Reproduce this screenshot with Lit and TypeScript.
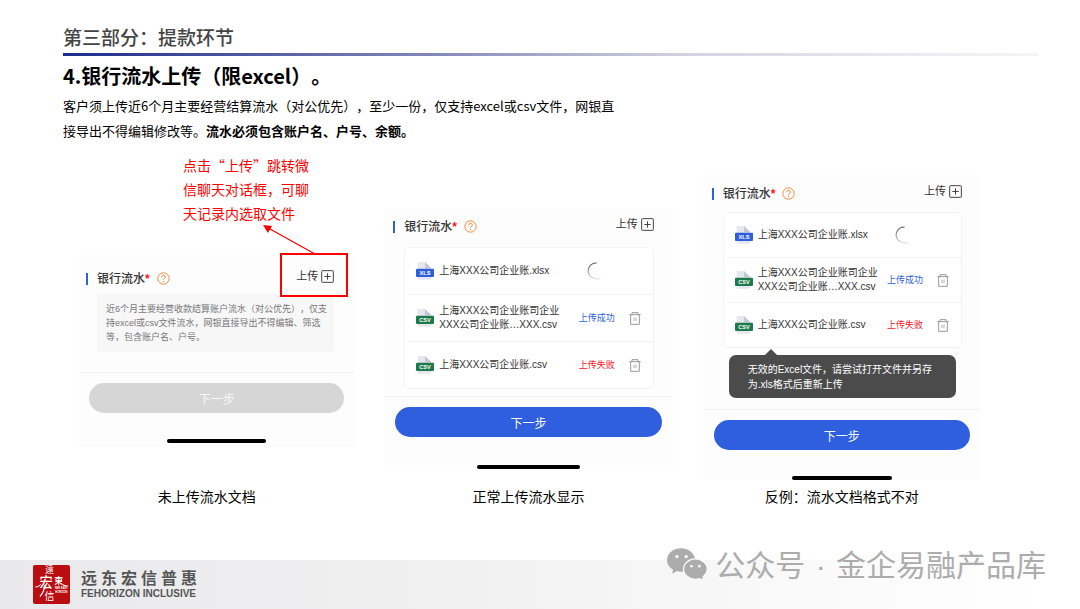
import { LitElement, html, svg, css, nothing } from "lit";
import { customElement, property } from "lit/decorators.js";

type FileKind = "xls" | "csv";
type Status = "loading" | "ok" | "fail";

interface FileRow {
  kind: FileKind;
  lines: string[];
  status: Status;
}

const FILES: FileRow[] = [
  { kind: "xls", lines: ["上海XXX公司企业账.xlsx"], status: "loading" },
  { kind: "csv", lines: ["上海XXX公司企业账司企业", "XXX公司企业账…XXX.csv"], status: "ok" },
  { kind: "csv", lines: ["上海XXX公司企业账.csv"], status: "fail" },
];

const fileIcon = (kind: FileKind) => html`
  <svg class="file" viewBox="0 0 54 54" aria-hidden="true">
    <path d="M9 0H27L46 19V49Q46 53 42 53H9Q5 53 5 49V4Q5 0 9 0Z" fill="#e4e7ed" />
    <path d="M27 0L46 19H31Q27 19 27 15Z" fill="#c2c8d2" />
    <path d="M0 23Q0 20 3 20H51Q54 20 54 23V42Q54 45 51 45H3Q0 45 0 42Z"
      fill=${kind === "xls" ? "#2d5fdc" : "#1d7a4a"} />
    ${svg`<text x="27" y="39" text-anchor="middle" font-size="17" font-weight="700" fill="#fff">${kind.toUpperCase()}</text>`}
  </svg>
`;

const trashIcon = html`
  <svg class="trash-icon" viewBox="0 0 36 39" aria-hidden="true" fill="none" stroke="#8a8a8a" stroke-width="2.6">
    <path d="M1 8H35M9 8V2H27V8M5 8V37H31V8" />
    <path d="M15 17V27M21 17V27" stroke-width="2" />
  </svg>
`;

const spinner = html`
  <svg class="spinner" viewBox="0 0 48 54" role="img" aria-label="上传中" fill="none">
    <defs>
      <linearGradient id="fade" x1="0" y1="0" x2="0" y2="1">
        <stop offset="0" stop-color="#555" />
        <stop offset="0.5" stop-color="#999" />
        <stop offset="1" stop-color="#e6e6e6" />
      </linearGradient>
    </defs>
    <path d="M29 3A24 24 0 0 0 9 42Q20 53 40 50" stroke="url(#fade)" stroke-width="3.4" />
  </svg>
`;

@customElement("upload-card")
export class UploadCard extends LitElement {
  @property({ attribute: false }) files: FileRow[] = [];
  @property() hint = "";
  @property({ attribute: false }) error: string[] = [];
  @property({ type: Boolean }) marked = false;

  static styles = css`
    :host {
      display: flex;
      flex-direction: column;
      background: #fdfdfe;
      font-family: "Liberation Sans", "Noto Sans CJK SC", sans-serif;
      color: #333;
      padding-top: var(--top, 8px);
    }
    button {
      font: inherit;
      color: inherit;
      background: none;
      border: 0;
      padding: 0;
      margin: 0;
    }
    .head {
      display: flex;
      align-items: flex-start;
      padding: 0 var(--right, 19px) 0 var(--left, 20px);
      line-height: 16px;
    }
    .title {
      display: flex;
      align-items: center;
      margin: 3px 0 0 -11px;
      font-size: 12px;
      font-weight: 500;
    }
    .title::before {
      content: "";
      width: 2px;
      height: 12px;
      margin-right: 9px;
      background: #2f5fdc;
    }
    .star {
      color: #f5141e;
      font-weight: 700;
    }
    .help {
      display: flex;
      margin: 4px 0 0 7px;
    }
    .help svg {
      width: 13px;
      height: 13px;
    }
    .upload {
      position: relative;
      display: flex;
      align-items: center;
      gap: 3px;
      margin-left: auto;
      font-size: 11px;
      line-height: 16px;
    }
    .upload .plus {
      width: 13px;
      height: 13px;
    }
    .frame {
      position: absolute;
      inset: -15px -14px -13px -16px;
      border: 2px solid #f00;
    }
    .arrow {
      position: absolute;
      width: 56px;
      height: 30px;
      right: 17px;
      bottom: 29px;
    }
    .hint {
      margin: 7px var(--right, 19px) 20px var(--left, 20px);
      padding: 8px 4px 8px 9px;
      border-radius: 3px;
      background: #f7f7f7;
      color: #777;
      font-size: 9px;
      line-height: 14px;
    }
    .list {
      list-style: none;
      margin: var(--list-gap, 12px) var(--right, 19px) 7px var(--left, 20px);
      padding: 0;
      border: 1px solid #f3f3f4;
      border-radius: 5px;
      background: #fff;
    }
    .row {
      display: grid;
      grid-template-columns: 18px 1fr 38px 12px;
      align-items: center;
      height: var(--row, 46px);
      margin-left: 3px;
      padding: 0 12px 0 8px;
      font-size: 10px;
      line-height: 14px;
    }
    .row + .row {
      border-top: 1px solid #f3f3f4;
    }
    .name {
      padding-left: 5px;
      white-space: nowrap;
    }
    .file {
      width: 18px;
      height: 18px;
      font-family: "Liberation Sans", sans-serif;
    }
    .status {
      font-size: 9px;
      margin-left: -12px;
      white-space: nowrap;
    }
    .loading {
      margin-left: -4px;
      display: flex;
    }
    .ok {
      color: #2f5fdc;
    }
    .fail {
      color: #f5141e;
    }
    .trash {
      display: flex;
    }
    .trash-icon {
      width: 12px;
      height: 13px;
    }
    .spinner {
      width: 16px;
      height: 18px;
    }
    .error {
      position: relative;
      margin: 0 25px 11px 26px;
      padding: 7px 8px 6px 19px;
      border-radius: 7px;
      background: #4b4b4b;
      color: #fff;
      font-size: 10px;
      line-height: 15px;
      white-space: nowrap;
    }
    .error::before {
      content: "";
      position: absolute;
      left: 36px;
      top: -6px;
      border: 6px solid transparent;
      border-top: 0;
      border-bottom-color: #4b4b4b;
    }
    .bottom {
      display: flex;
      flex-direction: column;
      align-items: center;
      border-top: 1px solid #f4f4f4;
      padding: 10px var(--side, 11px) 0;
    }
    .next {
      align-self: stretch;
      height: 30px;
      border-radius: 15px;
      background: #2f5fdf;
      color: #fff;
      font-size: 12px;
    }
    .next:disabled {
      background: #d6d6d6;
      color: #f6f6f6;
    }
    .home {
      width: 39%;
      height: 4px;
      margin: var(--home, 26px) 0 var(--end, 0);
      border-radius: 2px;
      background: #000;
    }
  `;

  private renderRow(f: FileRow) {
    return html`
      <li class="row">
        ${fileIcon(f.kind)}
        <span class="name">${f.lines.map((l, i) => html`${i ? html`<br />` : nothing}${l}`)}</span>
        ${f.status === "loading"
          ? html`<span class="loading">${spinner}</span>`
          : html`
              <span class="status ${f.status}">${f.status === "ok" ? "上传成功" : "上传失败"}</span>
              <button class="trash" aria-label="删除">${trashIcon}</button>
            `}
      </li>
    `;
  }

  render() {
    return html`
      <div class="head">
        <div class="title">银行流水<span class="star">*</span></div>
        <button class="help" aria-label="帮助">
          <svg viewBox="0 0 39 39" fill="none" stroke="#f58a3c" stroke-width="3" aria-hidden="true">
            <circle cx="19.500" cy="19.500" r="17" />
            <path d="M14 16Q14 10 19.500 10T25 15.500Q25 18 22 20T19.500 24.500" />
            <path d="M19.500 27V30.500" />
          </svg>
        </button>
        <button class="upload">
          上传
          <svg class="plus" viewBox="0 0 39 39" fill="none" stroke="#444" stroke-width="3" aria-hidden="true">
            <rect x="2" y="2" width="35" height="35" rx="2" />
            <path d="M10 19.500H29M19.500 10V29" />
          </svg>
          ${this.marked
            ? html`
                <span class="frame"></span>
                <svg class="arrow" viewBox="0 0 56 30" aria-hidden="true">
                  <path d="M54 29L9 4" stroke="#f00" stroke-width="1.300" fill="none" />
                  <path d="M2 0L11 1L7 8Z" fill="#f00" />
                </svg>
              `
            : nothing}
        </button>
      </div>
      ${this.hint ? html`<div class="hint">${this.hint}</div>` : nothing}
      ${this.files.length ? html`<ul class="list">${this.files.map((f) => this.renderRow(f))}</ul>` : nothing}
      ${this.error.length
        ? html`<div class="error" role="alert">${this.error[0]}<br />${this.error[1]}</div>`
        : nothing}
      <div class="bottom">
        <button class="next" ?disabled=${!this.files.length}>下一步</button>
        <div class="home"></div>
      </div>
    `;
  }
}

@customElement("app-root")
export class AppRoot extends LitElement {
  static styles = css`
    :host {
      display: block;
      font-family: "Noto Sans CJK SC", sans-serif;
      text-spacing-trim: space-all;
      color: #000;
      background: #fff;
    }
    .page {
      position: relative;
      display: flex;
      flex-direction: column;
      min-height: 100vh;
      overflow: hidden;
    }
    .intro {
      padding: 23px 42px 0 63px;
    }
    .section {
      margin: 0;
      font-size: 19px;
      line-height: 27px;
      font-weight: 500;
      color: #444;
    }
    .rule {
      height: 3px;
      margin: 3px 0 5px;
      background: linear-gradient(90deg, #1c2c8c 0%, #8488b8 38%, #d3d4e0 64%, #f6f6f9 100%);
    }
    h2 {
      margin: 0 0 2px;
      font-size: 20px;
      line-height: 30px;
      font-weight: 700;
    }
    .lead {
      margin: 0;
      font-size: 13px;
      line-height: 25px;
    }
    .shots {
      display: grid;
      grid-template-columns: 275fr 288fr 278fr;
      gap: 30px;
      align-items: end;
      padding: 10px 99px 0 79px;
    }
    figure {
      margin: 0;
    }
    .note {
      margin: 0 0 30px 104px;
      color: #f00;
      font-size: 14px;
      line-height: 24px;
      white-space: nowrap;
    }
    figcaption {
      font-size: 14px;
      line-height: 20px;
      text-align: center;
    }
    .empty {
      --top: 13px;
      --left: 18px;
      --right: 20px;
      --end: 4px;
      --side: 10px;
      margin-bottom: 39px;
    }
    .empty + figcaption {
      padding-right: 20px;
    }
    .normal {
      --home: 28px;
      --row: 46px;
      margin-bottom: 17px;
    }
    .wrong {
      --row: 44px;
      --list-gap: 10px;
      margin-bottom: 6px;
    }
    footer {
      display: flex;
      align-items: center;
      gap: 11px;
      height: 49px;
      margin-top: auto;
      padding-left: 33px;
      background: linear-gradient(90deg, #e9e9eb 0%, #f0f0f1 40%, #f7f7f8 65%, #fff 97%);
    }
    .logo {
      width: 37px;
      height: 39px;
      font-family: "Liberation Sans", "Noto Sans CJK TC", sans-serif;
    }
    .brand {
      color: #555;
      font-family: "Liberation Sans", "Noto Sans CJK SC", sans-serif;
      font-weight: 700;
    }
    .cn {
      display: flex;
      gap: 4px;
      font-size: 16px;
      line-height: 18px;
    }
    .en {
      font-size: 10px;
      line-height: 11px;
    }
    .watermark {
      position: absolute;
      right: 34px;
      bottom: 22px;
      display: flex;
      align-items: center;
      gap: 7px;
      color: #acacac;
      font-size: 30px;
      line-height: 42px;
      white-space: nowrap;
    }
    .wechat {
      width: 41px;
      height: 33px;
    }
    .dot {
      margin: 0 2px;
      font-family: "Liberation Sans", sans-serif;
    }
  `;

  render() {
    return html`
      <div class="page" lang="zh-CN">
        <header class="intro">
          <h1 class="section">第三部分：提款环节</h1>
          <div class="rule"></div>
          <h2>4.银行流水上传（限excel）。</h2>
          <p class="lead">
            客户须上传近6个月主要经营结算流水（对公优先），至少一份，仅支持excel或csv文件，网银直<br />接导出不得编辑修改等。<b>流水必须包含账户名、户号、余额。</b>
          </p>
        </header>

        <main class="shots">
          <figure>
            <p class="note">点击“上传”跳转微<br />信聊天对话框，可聊<br />天记录内选取文件</p>
            <upload-card
              class="empty"
              marked
              hint="近6个月主要经营收款结算账户流水（对公优先），仅支持excel或csv文件流水，网银直接导出不得编辑、筛选等，包含账户名、户号。"
            ></upload-card>
            <figcaption>未上传流水文档</figcaption>
          </figure>
          <figure>
            <upload-card class="normal" .files=${FILES}></upload-card>
            <figcaption>正常上传流水显示</figcaption>
          </figure>
          <figure>
            <upload-card
              class="wrong"
              .files=${FILES}
              .error=${["无效的Excel文件，请尝试打开文件并另存", "为.xls格式后重新上传"]}
            ></upload-card>
            <figcaption>反例：流水文档格式不对</figcaption>
          </figure>
        </main>

        <footer>
          <svg class="logo" viewBox="0 0 112 118" role="img" aria-label="远东宏信">
            <rect width="112" height="118" rx="6" fill="#b90d12" />
            <g fill="#fff" text-anchor="middle">
              <text x="50" y="25" font-size="27">遠</text>
              <text x="78" y="57" font-size="27" font-weight="500">東</text>
              <text x="40" y="68" font-size="40" font-weight="500">宏</text>
              <text x="50" y="106" font-size="30">信</text>
              <text x="86" y="74" font-size="8" font-weight="700">FAR EAST</text>
              <text x="86" y="84" font-size="8" font-weight="700">HORIZON</text>
            </g>
            <path d="M6 66Q16 65 26 56Q20 68 6 68ZM90 58Q98 62 108 63Q98 67 90 61Z" fill="#fff" />
            <path d="M36 62Q34 80 22 94" fill="none" stroke="#fff" stroke-width="4" stroke-linecap="round" />
          </svg>
          <div class="brand">
            <div class="cn">${[..."远东宏信普惠"].map((c) => html`<span>${c}</span>`)}</div>
            <div class="en">FEHORIZON INCLUSIVE</div>
          </div>
        </footer>

        <div class="watermark">
          <svg class="wechat" viewBox="80 56 124 100" aria-hidden="true">
            <path d="M122 57C98 57 80 73 80 93C80 105 87 115 98 121L96 134L110 126Q116 128 122 128C146 128 165 112 165 93S146 57 122 57Z" fill="#acacac" />
            <path d="M166 89C186 89 202 103 202 120C202 129 197 137 189 143L190 154L178 149Q172 151 166 151C146 151 130 137 130 120S146 89 166 89Z" fill="#acacac" stroke="#f9f9fa" stroke-width="4" />
            <g fill="#fafafa">
              <circle cx="110" cy="82" r="5" /><circle cx="138" cy="82" r="5" />
              <circle cx="154" cy="111" r="4" /><circle cx="178" cy="111" r="4" />
            </g>
          </svg>
          <span>公众号<span class="dot"> · </span>金企易融产品库</span>
        </div>
      </div>
    `;
  }
}
